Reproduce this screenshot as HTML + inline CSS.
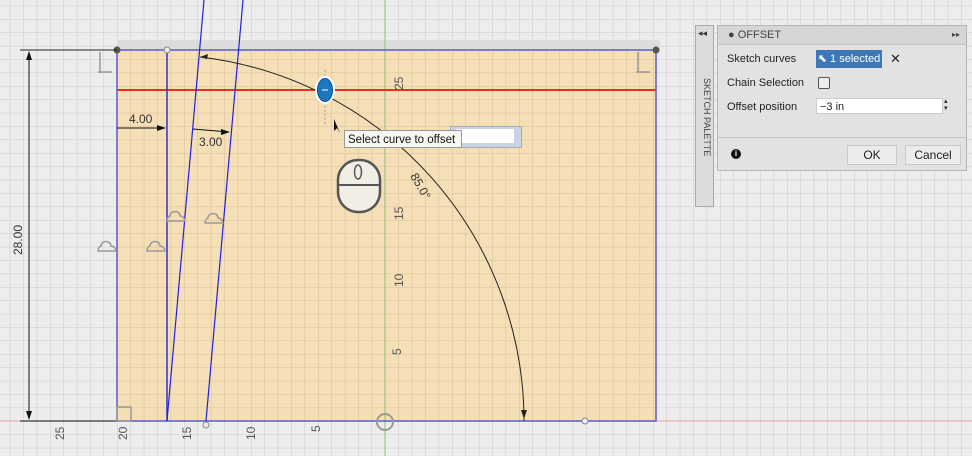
<!DOCTYPE html>
<html><head><meta charset="utf-8"><style>
body{margin:0;width:972px;height:456px;overflow:hidden;background:#ededed;font-family:"Liberation Sans",sans-serif;position:relative}
.abs{position:absolute}
</style></head><body>
<svg class="abs" style="left:0;top:0" width="972" height="456">
<defs>
<pattern id="g" patternUnits="userSpaceOnUse" x="9.8" y="5.6" width="13.4" height="13.4">
<path d="M0 0H13.4M0 0V13.4" stroke="#cacaca" stroke-width="1" fill="none"/>
</pattern>
<pattern id="g2" patternUnits="userSpaceOnUse" x="9.8" y="5.6" width="13.4" height="13.4">
<path d="M0 0H13.4M0 0V13.4" stroke="#d9be94" stroke-width="1" fill="none"/>
</pattern>
</defs>
<rect width="972" height="456" fill="#ededed"/>
<rect width="972" height="456" fill="url(#g)"/>
<rect x="117" y="40" width="543" height="10" fill="#d8d8d8" opacity="0.8"/>
<rect x="117" y="50" width="539" height="371" fill="#f5dfb7"/>
<rect x="117" y="50" width="539" height="371" fill="url(#g2)"/>
<line x1="385" y1="0" x2="385" y2="456" stroke="#8fbf70" stroke-width="1"/>
<line x1="0" y1="421" x2="972" y2="421" stroke="#e6a0a0" stroke-width="1"/>
<line x1="117" y1="90" x2="656" y2="90" stroke="#e8321e" stroke-width="2"/>
<rect x="117" y="50" width="539" height="371" fill="none" stroke="#5a5ad0" stroke-width="1.5"/>
<line x1="167" y1="50" x2="167" y2="421" stroke="#3030d0" stroke-width="1.5"/>
<line x1="204" y1="0" x2="167" y2="421" stroke="#2020e0" stroke-width="1.2"/>
<line x1="243" y1="0" x2="206" y2="421" stroke="#2020e0" stroke-width="1.2"/>
<circle cx="117" cy="50" r="3.5" fill="#555"/><circle cx="656" cy="50" r="3.5" fill="#555"/>
<circle cx="167" cy="50" r="3" fill="#eee" stroke="#889"/>
<circle cx="206" cy="425" r="3" fill="#eee" stroke="#889"/>
<circle cx="585" cy="421" r="3" fill="#eee" stroke="#889"/>
<path d="M200 57 A366.5 366.5 0 0 1 524 421" fill="none" stroke="#222" stroke-width="1"/>
<path d="M200 57 l8 -3 l-1 5z M524 419 l-3 -9 l6 0z" fill="#222"/>
<line x1="20" y1="50" x2="117" y2="50" stroke="#222"/>
<line x1="20" y1="421" x2="117" y2="421" stroke="#555" stroke-width="1.5"/>
<line x1="29" y1="52" x2="29" y2="419" stroke="#111"/>
<path d="M29 51 l-3 9 h6z M29 420 l-3 -9 h6z" fill="#111"/>
<line x1="117" y1="128" x2="165" y2="128" stroke="#111"/>
<path d="M166 128 l-9 -3 v6z" fill="#111"/>
<line x1="193" y1="129" x2="229" y2="132" stroke="#111"/>
<path d="M230 132 l-9 -3 v6z" fill="#111"/>
<rect x="117" y="407" width="14" height="14" fill="none" stroke="#999" stroke-width="1.5"/>
<g fill="none" stroke="#999" stroke-width="1.5">
<path d="M100 52v20M98 72h14M638 52v20M636 72h14"/>
<path d="M101 246c0-6 10-6 10 0c3 0 5 3 5 5h-18c0-3 2-5 3-5z"/>
<path d="M150 246c0-6 10-6 10 0c3 0 5 3 5 5h-18c0-3 2-5 3-5z"/>
<path d="M170 216c0-6 10-6 10 0c3 0 5 3 5 5h-18c0-3 2-5 3-5z"/>
<path d="M208 218c0-6 10-6 10 0c3 0 5 3 5 5h-18c0-3 2-5 3-5z"/>
</g>
<circle cx="385" cy="422" r="8" fill="none" stroke="#999" stroke-width="2"/>
<rect x="338" y="160" width="42" height="52" rx="20" fill="#f1eee6" stroke="#555" stroke-width="2.5"/>
<line x1="339" y1="185" x2="379" y2="185" stroke="#555" stroke-width="2"/>
<ellipse cx="358" cy="172" rx="3.5" ry="7" fill="none" stroke="#555" stroke-width="1.5"/>
<line x1="325" y1="70" x2="325" y2="125" stroke="#888" stroke-dasharray="1.5 2.5"/>
<ellipse cx="325" cy="90" rx="10" ry="14" fill="#fff"/>
<ellipse cx="325" cy="90" rx="7.5" ry="11.5" fill="#1a78c2" stroke="#0b4f88"/>
<path d="M322 90h6" stroke="#fff"/>
<path d="M334 119 v12 l3 -3 l3 5" fill="#111"/>
<g font-family="Liberation Sans" font-size="12" fill="#555">
<text transform="translate(403,90) rotate(-90)">25</text>
<text transform="translate(403,220) rotate(-90)">15</text>
<text transform="translate(403,287) rotate(-90)">10</text>
<text transform="translate(401,355) rotate(-90)">5</text>
<text transform="translate(64,440) rotate(-90)">25</text>
<text transform="translate(127,440) rotate(-90)">20</text>
<text transform="translate(191,440) rotate(-90)">15</text>
<text transform="translate(255,440) rotate(-90)">10</text>
<text transform="translate(320,432) rotate(-90)">5</text>
<text transform="translate(22,255) rotate(-90)" fill="#333">28.00</text>
<text x="129" y="123" fill="#333">4.00</text>
<text x="199" y="146" fill="#333">3.00</text>
<text transform="translate(410,176) rotate(60)" fill="#333">85.0°</text>
</g>
</svg>
<div class="abs" style="left:450px;top:126px;width:70px;height:20px;background:#c8d4e4;border:1px solid #aab;"></div>
<div class="abs" style="left:456px;top:129px;width:58px;height:14px;background:#fff;font-size:11px">3</div>
<div class="abs" style="left:344px;top:130px;width:118px;height:18px;background:#f7f7f2;border:1px solid #999;font-size:11.5px;line-height:18px;padding-left:3px;box-sizing:border-box;color:#111;white-space:nowrap">Select curve to offset</div>
<div class="abs" style="left:695px;top:25px;width:19px;height:182px;background:#dcdcdc;border:1px solid #aaa;box-sizing:border-box"></div>
<div class="abs" style="left:698px;top:28px;font-size:9px;color:#333">◂◂</div>
<div class="abs" style="left:712px;top:78px;transform-origin:0 0;transform:rotate(90deg);font-size:9px;color:#444;white-space:nowrap">SKETCH PALETTE</div>
<div class="abs" style="left:717px;top:25px;width:250px;height:146px;background:#e2e2e2;border:1px solid #b5b5b5;box-sizing:border-box;font-size:11px;color:#222">
<div style="height:18px;background:#d6d6d6;border-bottom:1px solid #c6c6c6;line-height:18px;padding-left:10px;color:#444">● OFFSET<span style="float:right;margin-right:6px;font-size:8px">▸▸</span></div>
<div class="abs" style="left:9px;top:27px">Sketch curves</div>
<div class="abs" style="left:98px;top:24px;width:66px;height:18px;background:#3c78b8;color:#fff;line-height:18px;font-size:11px;text-align:center">⬉ 1 selected</div>
<div class="abs" style="left:172px;top:25px;font-size:13px">✕</div>
<div class="abs" style="left:9px;top:51px">Chain Selection</div>
<div class="abs" style="left:100px;top:51px;width:10px;height:10px;border:1px solid #555;border-radius:2px;background:#eee"></div>
<div class="abs" style="left:9px;top:75px">Offset position</div>
<div class="abs" style="left:98px;top:72px;width:127px;height:16px;background:#fff;border:1px solid #ccc;line-height:16px;padding-left:3px;box-sizing:border-box">−3 in</div>
<div class="abs" style="left:226px;top:72px;font-size:7px;line-height:7px">▴<br>▾</div>
<div class="abs" style="left:0;top:111px;width:248px;border-top:1px solid #c4c4c4"></div>
<div class="abs" style="left:13px;top:123px;width:10px;height:10px;border-radius:50%;background:#111;color:#fff;font-size:8px;line-height:10px;text-align:center;font-weight:bold">i</div>
<div class="abs" style="left:129px;top:119px;width:48px;height:18px;background:#ececec;border:1px solid #c8c8c8;text-align:center;line-height:18px;font-size:12px">OK</div>
<div class="abs" style="left:187px;top:119px;width:54px;height:18px;background:#ececec;border:1px solid #c8c8c8;text-align:center;line-height:18px;font-size:12px">Cancel</div>
</div>
</body></html>
